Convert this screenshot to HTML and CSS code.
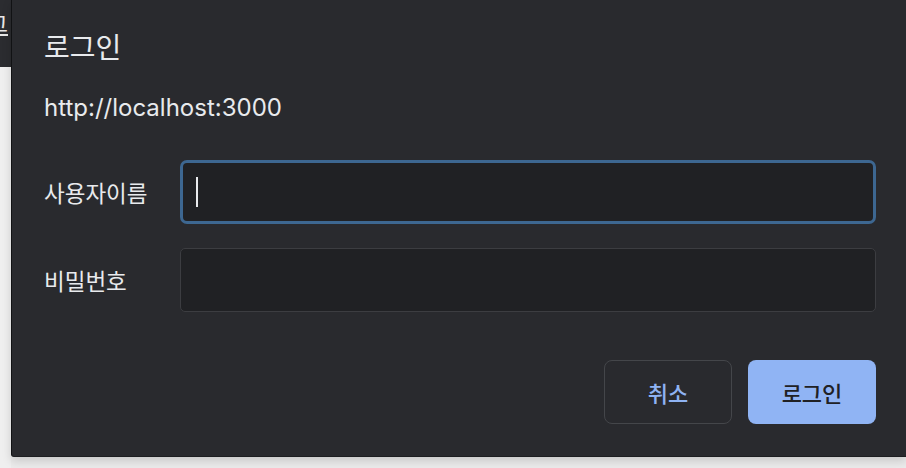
FILE: index.html
```html
<!DOCTYPE html>
<html lang="ko">
<head>
<meta charset="utf-8">
<title>로그인</title>
<link rel="stylesheet" href="styles.css">
</head>
<body>
<div class="page">
  <div class="side">
    <div class="side-top"><span class="side-text">로그</span></div>
  </div>
  <div class="dialog">
    <h1 class="title">로그인</h1>
    <p class="origin">http://localhost:3000</p>
    <div class="form">
      <div class="row">
        <span class="label">사용자이름</span>
        <div class="input focused"><span class="caret"></span></div>
      </div>
      <div class="row">
        <span class="label">비밀번호</span>
        <div class="input"></div>
      </div>
    </div>
    <div class="actions">
      <button class="btn btn-cancel">취소</button>
      <button class="btn btn-primary">로그인</button>
    </div>
  </div>
</div>
</body>
</html>
```
FILE: styles.css
```css
html, body {
  margin: 0;
  padding: 0;
  width: 906px;
  height: 468px;
  overflow: hidden;
  background: #ebebeb;
  font-family: Inter, "Noto Sans CJK KR", sans-serif;
}
.page {
  display: flex;
  height: 468px;
  width: 906px;
}
.side {
  width: 11px;
  flex: none;
  background: #efefef;
}
.side-top {
  height: 67px;
  background: #2b2c30;
  overflow: hidden;
  display: flex;
  justify-content: flex-end;
  padding-top: 6px;
  box-sizing: border-box;
}
.side-text {
  white-space: nowrap;
  color: #e8e8e8;
  font-size: 22px;
  text-decoration: underline;
  margin-right: 3px;
}
.dialog {
  flex: none;
  width: 895px;
  height: 457px;
  box-sizing: border-box;
  background: #292a2e;
  border-left: 1px solid #111214;
  border-bottom: 1px solid #1d1e21;
  border-bottom-left-radius: 3px;
  box-shadow: 0 4px 10px rgba(0,0,0,0.15);
  padding: 28px 30px 0 32px;
  color: #e8eaed;
  display: flex;
  flex-direction: column;
}
.title {
  margin: 0;
  font-size: 28px;
  font-weight: 400;
  line-height: 40px;
}
.origin {
  margin: 24px 0 0;
  font-size: 24px;
  line-height: 32px;
}
.form {
  margin-top: 36px;
  display: flex;
  flex-direction: column;
  gap: 24px;
}
.row {
  display: flex;
  align-items: center;
}
.label {
  width: 136px;
  flex: none;
  font-size: 22.5px;
}
.input {
  flex: 1;
  height: 64px;
  box-sizing: border-box;
  background: #202124;
  border: 1px solid #3c3d41;
  border-radius: 5px;
  display: flex;
  align-items: center;
  padding-left: 13px;
}
.input.focused {
  border: 3px solid #3d6791;
  border-radius: 7px;
}
.caret {
  width: 2px;
  height: 30px;
  background: #e8eaed;
}
.actions {
  margin-top: 48px;
  display: flex;
  justify-content: flex-end;
  gap: 16px;
}
.btn {
  width: 128px;
  height: 64px;
  border-radius: 8px;
  font-family: Inter, "Noto Sans CJK KR", sans-serif;
  font-size: 22px;
  font-weight: 500;
  box-sizing: border-box;
  cursor: pointer;
}
.btn-cancel {
  background: transparent;
  border: 1px solid #44464a;
  color: #8fb3f3;
}
.btn-primary {
  background: #90b4f4;
  border: none;
  color: #202124;
}
```
